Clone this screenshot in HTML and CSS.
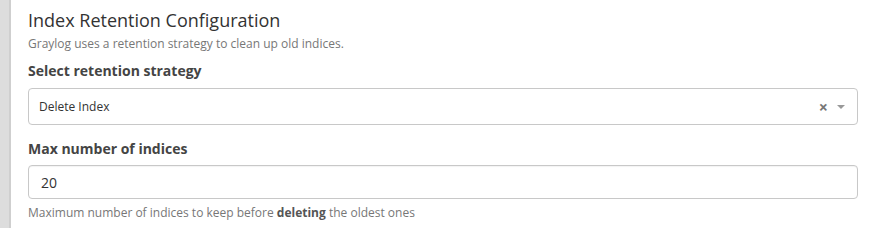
FILE: index.html
```html
<!DOCTYPE html>
<html>
<head>
<meta charset="utf-8">
<link rel="stylesheet" href="styles.css">
</head>
<body>
<div class="page">
  <div class="rail"></div>
  <div class="content">
    <h2 class="title">Index Retention Configuration</h2>
    <p class="lead">Graylog uses a retention strategy to clean up old indices.</p>
    <label class="label">Select retention strategy</label>
    <div class="select">
      <span class="select-value">Delete Index</span>
      <span class="select-controls">
        <span class="clear">×</span>
        <span class="arrow"></span>
      </span>
    </div>
    <label class="label label-2">Max number of indices</label>
    <div class="input">20</div>
    <p class="help">Maximum number of indices to keep before <b>deleting</b> the oldest ones</p>
  </div>
</div>
</body>
</html>
```
FILE: styles.css
```css
html, body {
  margin: 0;
  padding: 0;
  background: #fff;
  font-family: "Open Sans", "DejaVu Sans", sans-serif;
  color: #333;
}
.page {
  display: flex;
  height: 228px;
  overflow: hidden;
}
.rail {
  width: 9px;
  background: #dddddd;
  border-right: 2px solid #cfcfcf;
  flex: none;
}
.content {
  flex: 1;
  padding: 8px 15px 0 17px;
}
.title {
  margin: 0;
  font-size: 18px;
  font-weight: 400;
  line-height: 24px;
  color: #333;
}
.lead {
  margin: 3px 0 0 0;
  font-size: 12px;
  line-height: 17px;
  color: #777;
}
.label {
  display: block;
  margin-top: 9px;
  font-size: 14px;
  font-weight: 700;
  line-height: 20px;
  color: #444;
}
.label-2 {
  margin-top: 14px;
}
.select {
  margin-top: 7px;
  height: 37px;
  box-sizing: border-box;
  border: 1px solid #c8c8c8;
  border-radius: 4px;
  display: flex;
  align-items: center;
  justify-content: space-between;
  padding: 0 12px 0 10px;
  font-size: 12px;
  color: #333;
}
.select-controls {
  display: flex;
  align-items: center;
  gap: 9px;
}
.clear {
  font-size: 16px;
  font-weight: 700;
  line-height: 1;
  color: #777;
}
.arrow {
  width: 0;
  height: 0;
  border-left: 4px solid transparent;
  border-right: 4px solid transparent;
  border-top: 4px solid #999;
}
.input {
  margin-top: 6px;
  height: 34px;
  box-sizing: border-box;
  border: 1px solid #c8c8c8;
  border-radius: 4px;
  padding: 0 12px;
  display: flex;
  align-items: center;
  font-size: 14px;
  color: #333;
  box-shadow: inset 0 1px 1px rgba(0,0,0,0.05);
}
.help {
  margin: 5px 0 0 0;
  font-size: 12px;
  line-height: 17px;
  color: #777;
}
.help b {
  color: #555;
}
```
